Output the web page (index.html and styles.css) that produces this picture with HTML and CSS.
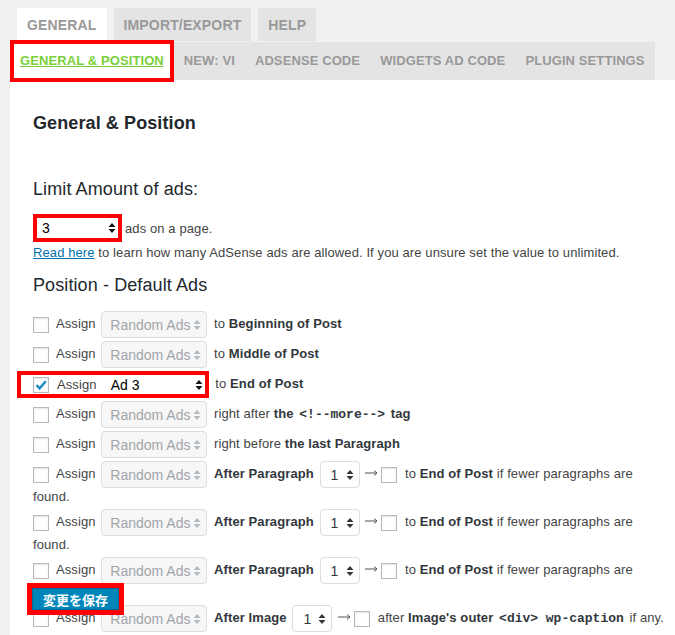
FILE: index.html
```html
<!DOCTYPE html>
<html lang="en">
<head>
    <meta charset="UTF-8">
    <meta name="viewport" content="width=device-width, initial-scale=1.0">
    <title>General &amp; Position</title>
    <link rel="stylesheet" href="styles.css">
</head>
<body>
    <div class="wrap">
        <nav class="tabs">
            <a class="tab active" href="#">General</a>
            <a class="tab" href="#">Import/Export</a>
            <a class="tab" href="#">Help</a>
        </nav>
        <nav class="subtabs">
            <a class="subtab active" href="#">General &amp; Position</a>
            <a class="subtab" href="#">New: VI</a>
            <a class="subtab" href="#">AdSense Code</a>
            <a class="subtab" href="#">Widgets Ad Code</a>
            <a class="subtab" href="#">Plugin Settings</a>
        </nav>

        <div class="panel">
            <h2>General &amp; Position</h2>

            <h3 class="first">Limit Amount of ads:</h3>
            <div class="limit">
                <span class="sel lim">3<svg class="arr" width="8" height="12" viewBox="0 0 8 12"><path d="M0.5 5L4 1L7.5 5Z M0.5 7L4 11L7.5 7Z"/></svg></span> ads on a page.
            </div>
            <p class="note"><a href="#">Read here</a> to learn how many AdSense ads are allowed. If you are unsure set the value to unlimited.</p>

            <h3>Position - Default Ads</h3>

            <div class="row"><span class="cb"></span> Assign <span class="sel off">Random Ads<svg class="arr" width="8" height="12" viewBox="0 0 8 12"><path d="M0.5 5L4 1L7.5 5Z M0.5 7L4 11L7.5 7Z"/></svg></span> to <b>Beginning of Post</b></div>

            <div class="row"><span class="cb"></span> Assign <span class="sel off">Random Ads<svg class="arr" width="8" height="12" viewBox="0 0 8 12"><path d="M0.5 5L4 1L7.5 5Z M0.5 7L4 11L7.5 7Z"/></svg></span> to <b>Middle of Post</b></div>

            <div class="row"><span class="mark"><span class="cb on"><svg width="14" height="14" viewBox="0 0 14 14"><path d="M2.5 7.2L5.6 10.4L11.8 3.2" fill="none" stroke="#1e8cbe" stroke-width="2.4"/></svg></span>Assign<span class="sel pick">Ad 3<svg class="arr" width="8" height="12" viewBox="0 0 8 12"><path d="M0.5 5L4 1L7.5 5Z M0.5 7L4 11L7.5 7Z"/></svg></span></span> to <b>End of Post</b></div>

            <div class="row"><span class="cb"></span> Assign <span class="sel off">Random Ads<svg class="arr" width="8" height="12" viewBox="0 0 8 12"><path d="M0.5 5L4 1L7.5 5Z M0.5 7L4 11L7.5 7Z"/></svg></span> right after <b>the <code>&lt;!--more--&gt;</code> tag</b></div>

            <div class="row"><span class="cb"></span> Assign <span class="sel off">Random Ads<svg class="arr" width="8" height="12" viewBox="0 0 8 12"><path d="M0.5 5L4 1L7.5 5Z M0.5 7L4 11L7.5 7Z"/></svg></span> right before <b>the last Paragraph</b></div>

            <div class="row"><span class="cb"></span> Assign <span class="sel off">Random Ads<svg class="arr" width="8" height="12" viewBox="0 0 8 12"><path d="M0.5 5L4 1L7.5 5Z M0.5 7L4 11L7.5 7Z"/></svg></span> <b>After Paragraph</b> <span class="sel num">1<svg class="arr" width="8" height="12" viewBox="0 0 8 12"><path d="M0.5 5L4 1L7.5 5Z M0.5 7L4 11L7.5 7Z"/></svg></span> <svg class="to" width="13" height="8" viewBox="0 0 13 8"><path d="M0 4H12M9 1.5L12 4L9 6.5" fill="none" stroke="#555" stroke-width="1"/></svg><span class="cb small"></span> to <b>End of Post</b> if fewer paragraphs are found.</div>

            <div class="row"><span class="cb"></span> Assign <span class="sel off">Random Ads<svg class="arr" width="8" height="12" viewBox="0 0 8 12"><path d="M0.5 5L4 1L7.5 5Z M0.5 7L4 11L7.5 7Z"/></svg></span> <b>After Paragraph</b> <span class="sel num">1<svg class="arr" width="8" height="12" viewBox="0 0 8 12"><path d="M0.5 5L4 1L7.5 5Z M0.5 7L4 11L7.5 7Z"/></svg></span> <svg class="to" width="13" height="8" viewBox="0 0 13 8"><path d="M0 4H12M9 1.5L12 4L9 6.5" fill="none" stroke="#555" stroke-width="1"/></svg><span class="cb small"></span> to <b>End of Post</b> if fewer paragraphs are found.</div>

            <div class="row"><span class="cb"></span> Assign <span class="sel off">Random Ads<svg class="arr" width="8" height="12" viewBox="0 0 8 12"><path d="M0.5 5L4 1L7.5 5Z M0.5 7L4 11L7.5 7Z"/></svg></span> <b>After Paragraph</b> <span class="sel num">1<svg class="arr" width="8" height="12" viewBox="0 0 8 12"><path d="M0.5 5L4 1L7.5 5Z M0.5 7L4 11L7.5 7Z"/></svg></span> <svg class="to" width="13" height="8" viewBox="0 0 13 8"><path d="M0 4H12M9 1.5L12 4L9 6.5" fill="none" stroke="#555" stroke-width="1"/></svg><span class="cb small"></span> to <b>End of Post</b> if fewer paragraphs are found.</div>

            <div class="row single"><span class="cb"></span> Assign <span class="sel off">Random Ads<svg class="arr" width="8" height="12" viewBox="0 0 8 12"><path d="M0.5 5L4 1L7.5 5Z M0.5 7L4 11L7.5 7Z"/></svg></span> <b>After Image</b> <span class="sel num">1<svg class="arr" width="8" height="12" viewBox="0 0 8 12"><path d="M0.5 5L4 1L7.5 5Z M0.5 7L4 11L7.5 7Z"/></svg></span> <svg class="to" width="13" height="8" viewBox="0 0 13 8"><path d="M0 4H12M9 1.5L12 4L9 6.5" fill="none" stroke="#555" stroke-width="1"/></svg><span class="cb small"></span> after <b>Image's outer <code>&lt;div&gt;</code> <code>wp-caption</code></b> if any.</div>
        </div>

        <div class="save"><button type="submit">変更を保存</button></div>
    </div>
</body>
</html>
```

FILE: styles.css
```css
body {
    margin: 0;
    background-color: #f1f1f1;
    font-family: "Liberation Sans", Arial, sans-serif;
    font-size: 13px;
    letter-spacing: 0.1px;
    color: #444;
    overflow: hidden;
}
.wrap {
    padding-left: 10px;
}
a {
    color: #0073aa;
}

/* top tabs */
.tabs {
    display: flex;
    padding: 8px 0 0 7px;
}
.tab {
    height: 33px;
    line-height: 34px;
    padding: 0 10px;
    margin-right: 7px;
    background-color: #e4e4e4;
    color: #999;
    font-size: 14px;
    font-weight: bold;
    letter-spacing: 0.15px;
    text-transform: uppercase;
    text-decoration: none;
}
.tab.active {
    background-color: #fff;
}

/* second row */
.subtabs {
    display: flex;
    align-items: center;
    width: fit-content;
    height: 38px;
    margin-top: 1px;
    background-color: #e4e4e4;
}
.subtab {
    line-height: 38px;
    padding: 0 10px;
    color: #999;
    font-size: 13px;
    font-weight: bold;
    text-transform: uppercase;
    text-decoration: none;
}
.subtab.active {
    height: 42px;
    line-height: 34px;
    margin: -2px 0;
    padding: 0 6px;
    box-sizing: border-box;
    border: 4px solid #f00;
    background-color: #fff;
    color: #7ad03a;
    text-decoration: underline;
}

/* content */
.panel {
    background-color: #fff;
    padding: 32px 7px 40px 23px;
    min-height: 600px;
}
h2 {
    margin: 0;
    font-size: 18px;
    line-height: 23px;
    color: #23282d;
}
h3 {
    margin: 12px 0 14px;
    font-size: 18px;
    font-weight: normal;
    line-height: 23px;
    color: #23282d;
}
h3.first {
    margin-top: 43px;
    margin-bottom: 12px;
}
.limit {
    display: flex;
    align-items: center;
    gap: 3px;
    height: 30px;
}
.note {
    margin: 1px 0 0;
    line-height: 18px;
}
.row {
    line-height: 18px;
    margin-bottom: 3px;
}
.row.single {
    white-space: nowrap;
}
b {
    color: #32373c;
}
code {
    font-family: "Liberation Mono", "Courier New", monospace;
    font-size: 13px;
    font-weight: bold;
    letter-spacing: 0;
    padding: 0 2px;
}

/* fake select boxes */
.sel {
    display: inline-flex;
    align-items: center;
    justify-content: space-between;
    box-sizing: border-box;
    height: 27px;
    vertical-align: middle;
    background-color: #fff;
    border: 1px solid #ddd;
    border-radius: 4px;
    color: #32373c;
    font-size: 14px;
    letter-spacing: 0;
}
.sel .arr {
    fill: #32373c;
}
.sel.off {
    width: 106px;
    margin: 0 3px 0 2px;
    padding: 0 5px 0 8px;
    background-color: #f7f7f7;
    color: #a0a5aa;
}
.sel.off .arr {
    fill: #b4b9be;
}
.sel.lim {
    width: 89px;
    height: 28px;
    padding: 0 2px 0 5px;
    border: 4px solid #f00;
    border-radius: 0;
    color: #000;
}
.sel.lim .arr,
.sel.pick .arr {
    fill: #111;
}
.sel.pick {
    width: 102px;
    height: 19px;
    margin-left: 6px;
    padding: 0 2px 0 8px;
    border: none;
    border-radius: 0;
    color: #000;
}
.sel.num {
    width: 40px;
    margin-left: 2px;
    padding: 0 5px 0 10px;
}

/* checkboxes */
.cb {
    display: inline-block;
    box-sizing: border-box;
    width: 16px;
    height: 16px;
    margin-right: 4px;
    vertical-align: middle;
    background-color: #fff;
    border: 1px solid #b4b9be;
    box-shadow: inset 0 1px 2px rgba(0, 0, 0, 0.1);
}
.cb svg {
    display: block;
}
.cb.small {
    margin-left: 3px;
}
.to {
    margin-left: 2px;
    vertical-align: 1px;
}

/* red marker around the checked row */
.mark {
    display: inline-flex;
    align-items: center;
    box-sizing: border-box;
    height: 27px;
    margin-left: -16px;
    margin-right: 3px;
    padding-left: 12px;
    vertical-align: middle;
    border: 4px solid #f00;
}
.mark .cb {
    margin-right: 8px;
}

/* floating save button */
.save {
    position: absolute;
    left: 27px;
    top: 583px;
    border: 5px solid #f00;
}
.save button {
    display: block;
    height: 22px;
    padding: 0 10px;
    border: 1px solid #006799;
    background-color: #0085ba;
    color: #fff;
    font-family: "Liberation Sans", "Noto Sans CJK JP", sans-serif;
    font-size: 13px;
    font-weight: bold;
    cursor: pointer;
}
```
